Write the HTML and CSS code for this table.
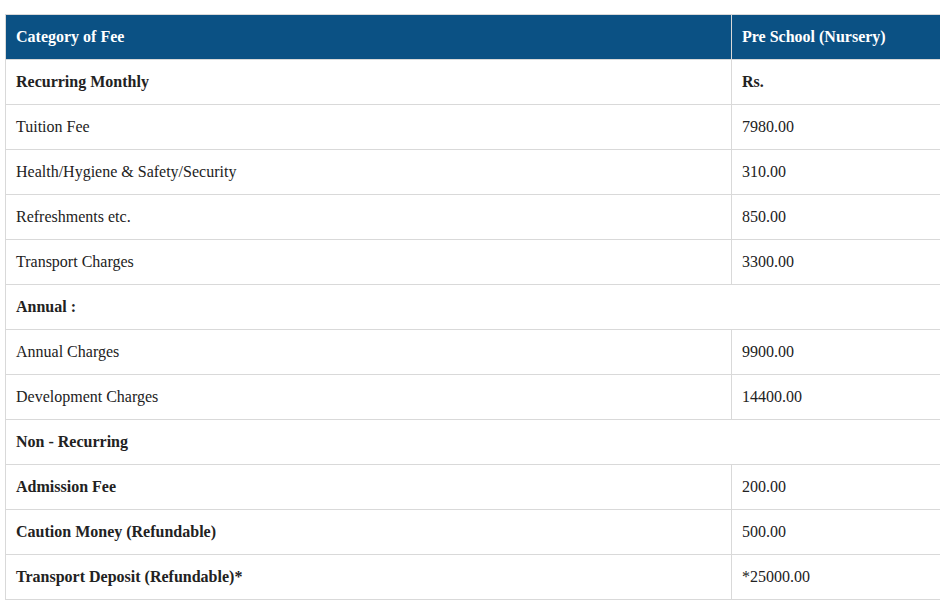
FILE: index.html
```html
<!DOCTYPE html>
<html>
<head>
<meta charset="utf-8">
<link rel="stylesheet" href="styles.css">
</head>
<body>
<div class="wrap">
<table class="fees">
<colgroup><col class="c1"><col class="c2"></colgroup>
<thead>
<tr><th>Category of Fee</th><th>Pre School (Nursery)</th></tr>
</thead>
<tbody>
<tr><td class="b">Recurring Monthly</td><td class="b">Rs.</td></tr>
<tr><td>Tuition Fee</td><td>7980.00</td></tr>
<tr><td>Health/Hygiene &amp; Safety/Security</td><td>310.00</td></tr>
<tr><td>Refreshments etc.</td><td>850.00</td></tr>
<tr><td>Transport Charges</td><td>3300.00</td></tr>
<tr><td class="b" colspan="2">Annual :</td></tr>
<tr><td>Annual Charges</td><td>9900.00</td></tr>
<tr><td>Development Charges</td><td>14400.00</td></tr>
<tr><td class="b" colspan="2">Non - Recurring</td></tr>
<tr><td class="b">Admission Fee</td><td>200.00</td></tr>
<tr><td class="b">Caution Money (Refundable)</td><td>500.00</td></tr>
<tr><td class="b">Transport Deposit (Refundable)*</td><td>*25000.00</td></tr>
</tbody>
</table>
</div>
</body>
</html>
```
FILE: styles.css
```css
html, body {
  margin: 0;
  padding: 0;
  background: #fff;
  overflow: hidden;
}
.wrap {
  padding: 14px 0 0 5px;
}
.fees {
  border-collapse: collapse;
  width: 936px;
  table-layout: fixed;
  font-family: "Liberation Serif", "Times New Roman", serif;
  font-size: 16px;
  line-height: 20px;
  color: #222;
}
.c1 { width: 726px; }
.c2 { width: 210px; }
.fees th, .fees td {
  border: 1px solid #d9d9d9;
  padding: 12px 10px;
  text-align: left;
  vertical-align: middle;
  white-space: nowrap;
}
.fees th {
  background: #0b5184;
  color: #fff;
  font-weight: bold;
}
.fees td.b {
  font-weight: bold;
}
```
